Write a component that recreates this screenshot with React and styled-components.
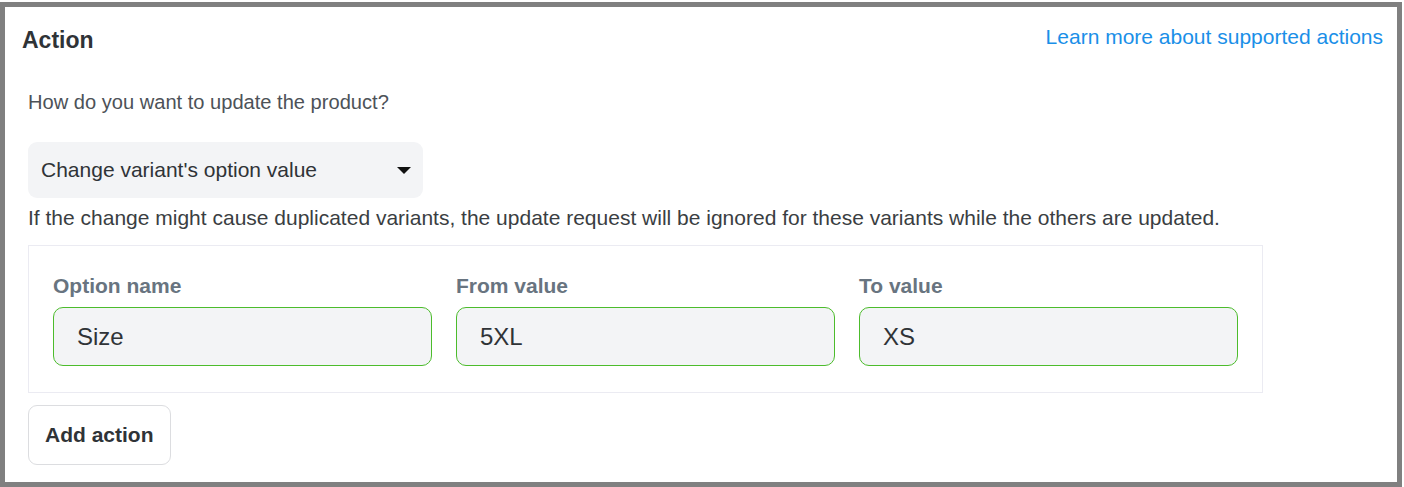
import styled, { createGlobalStyle } from 'styled-components'

const GlobalStyle = createGlobalStyle`
  html, body {
    margin: 0;
    padding: 0;
    background: #ffffff;
    font-family: "Liberation Sans", Arial, sans-serif;
  }
`

const fields = [
  { label: 'Option name', value: 'Size' },
  { label: 'From value', value: '5XL' },
  { label: 'To value', value: 'XS' },
]

function App() {
  return (
    <>
      <GlobalStyle />
      <Page>
        <Panel>
          <Header>
            <Title>Action</Title>
            <LearnLink href="#">Learn more about supported actions</LearnLink>
          </Header>
          <Body>
            <Question>How do you want to update the product?</Question>
            <Select>
              <span>Change variant's option value</span>
              <Caret />
            </Select>
            <Helper>
              If the change might cause duplicated variants, the update request will be ignored for these variants while the others are updated.
            </Helper>
            <OptionsCard>
              {fields.map((f) => (
                <Field key={f.label}>
                  <FieldLabel>{f.label}</FieldLabel>
                  <ValueInput>{f.value}</ValueInput>
                </Field>
              ))}
            </OptionsCard>
            <AddButton>Add action</AddButton>
          </Body>
        </Panel>
      </Page>
    </>
  )
}

const Page = styled.div`
  padding-top: 2px;
  width: 1402px;
`

const Panel = styled.div`
  box-sizing: border-box;
  height: 485px;
  border: 5px solid #808080;
  background: #ffffff;
`

const Header = styled.div`
  display: flex;
  justify-content: space-between;
  align-items: flex-start;
  padding: 18px 14px 0 17px;
`

const Title = styled.h2`
  margin: 1px 0 0 0;
  font-size: 23px;
  line-height: 28px;
  font-weight: 700;
  color: #2f3337;
`

const LearnLink = styled.a`
  font-size: 21px;
  line-height: 24px;
  color: #1a8fe8;
  text-decoration: none;
`

const Body = styled.div`
  padding: 0 23px;
`

const Question = styled.p`
  margin: 36px 0 0 0;
  font-size: 20.1px;
  line-height: 24px;
  color: #4d5258;
`

const Select = styled.div`
  box-sizing: border-box;
  margin-top: 28px;
  width: 395px;
  height: 56px;
  display: flex;
  align-items: center;
  justify-content: space-between;
  padding: 0 12px 0 13px;
  background: #f3f4f6;
  border-radius: 9px;
  font-size: 21px;
  color: #2f3337;
`

const Caret = styled.span`
  width: 0;
  height: 0;
  border-left: 7px solid transparent;
  border-right: 7px solid transparent;
  border-top: 7px solid #111;
`

const Helper = styled.p`
  margin: 8px 0 0 0;
  font-size: 21px;
  line-height: 24px;
  color: #3a3e42;
`

const OptionsCard = styled.div`
  box-sizing: border-box;
  margin-top: 15px;
  width: 1235px;
  border: 1px solid #ebebf2;
  padding: 28px 25px 26px 24px;
  display: grid;
  grid-template-columns: repeat(3, 379px);
  column-gap: 24px;
`

const Field = styled.div`
  display: flex;
  flex-direction: column;
  gap: 9px;
`

const FieldLabel = styled.label`
  font-size: 21px;
  line-height: 24px;
  font-weight: 700;
  color: #687480;
`

const ValueInput = styled.div`
  box-sizing: border-box;
  height: 59px;
  display: flex;
  align-items: center;
  padding: 0 23px;
  background: #f3f4f6;
  border: 1px solid #4cbc2c;
  border-radius: 10px;
  font-size: 24px;
  color: #2f3337;
`

const AddButton = styled.button`
  box-sizing: border-box;
  margin-top: 12px;
  height: 60px;
  padding: 0 16px 0 16px;
  background: #ffffff;
  border: 1px solid #dcdde0;
  border-radius: 9px;
  font-family: "Liberation Sans", Arial, sans-serif;
  font-size: 21px;
  font-weight: 700;
  color: #2f3337;
`

export default App
